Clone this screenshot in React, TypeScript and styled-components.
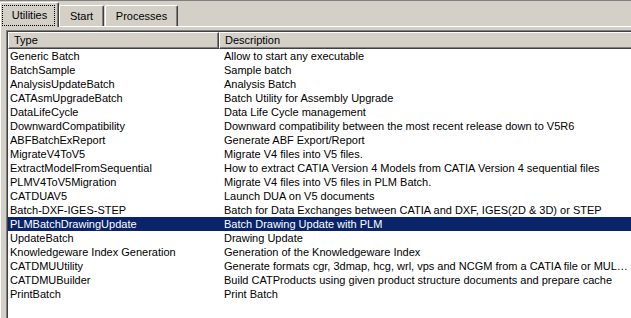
import styled, { createGlobalStyle } from "styled-components";

const Global = createGlobalStyle`
    html, body {
        margin: 0;
        padding: 0;
        background: #d4d0c8;
        overflow: hidden;
    }
    body {
        font-family: "Liberation Sans", Arial, sans-serif;
        font-size: 11px;
        color: #000;
    }
`;

const Window = styled.div`
    width: 631px;
    height: 318px;
    border-top: 1px solid #808080;
    box-sizing: border-box;
    display: flex;
    flex-direction: column;
    overflow: hidden;
`;
const TabStrip = styled.div`
    height: 25px;
    display: flex;
    align-items: flex-end;
    gap: 1px;
    position: relative;
    z-index: 1;
`;
const Tab = styled.div<{ $active?: boolean; $w: number }>`
    box-sizing: border-box;
    width: ${(p) => p.$w}px;
    height: ${(p) => (p.$active ? "25px" : "21px")};
    margin-bottom: ${(p) => (p.$active ? "-1px" : "0")};
    margin-right: ${(p) => (p.$active ? "-1px" : "0")};
    display: flex;
    align-items: center;
    justify-content: center;
    background: #d4d0c8;
    border-top: 1px solid #fff;
    border-left: 1px solid #fff;
    border-right: 1px solid #404040;
    box-shadow: inset -1px 0 0 #808080;
    border-radius: 2px 2px 0 0;
    position: relative;
`;
const Focus = styled.div`
    position: absolute;
    left: 1px;
    right: 3px;
    top: 2px;
    bottom: 1px;
    border: 1px dotted #000;
    pointer-events: none;
`;
const Panel = styled.div`
    flex: 1;
    border-top: 1px solid #fff;
    border-left: 1px solid #fff;
    padding: 3px 0 0 5px;
    display: flex;
    flex-direction: column;
    min-height: 0;
`;
const ListView = styled.div`
    flex: 1;
    margin-right: -2px;
    background: #fff;
    border-top: 1px solid #808080;
    border-left: 1px solid #808080;
    box-shadow: inset 1px 1px 0 #404040;
    padding: 1px 0 0 1px;
    display: flex;
    flex-direction: column;
`;
const HeaderRow = styled.div`
    display: grid;
    grid-template-columns: 211px 1fr;
`;
const HeaderCell = styled.div<{ $pad: number }>`
    box-sizing: border-box;
    height: 17px;
    background: #d4d0c8;
    border-top: 1px solid #fff;
    border-left: 1px solid #fff;
    border-bottom: 1px solid #404040;
    border-right: 1px solid #404040;
    box-shadow: inset -1px -1px 0 #808080;
    padding-left: ${(p) => p.$pad}px;
    line-height: 14px;
    white-space: nowrap;
`;
const Row = styled.div<{ $selected?: boolean }>`
    display: grid;
    grid-template-columns: 211px 1fr;
    height: 14px;
    line-height: 14px;
    background: ${(p) => (p.$selected ? "#0a246a" : "transparent")};
    color: ${(p) => (p.$selected ? "#fff" : "#000")};
`;
const Cell = styled.div<{ $pad: number }>`
    padding-left: ${(p) => p.$pad}px;
    padding-right: 4px;
    white-space: nowrap;
    overflow: hidden;
    text-overflow: ellipsis;
`;

const batches = [
    ["Generic Batch", "Allow to start any executable"],
    ["BatchSample", "Sample batch"],
    ["AnalysisUpdateBatch", "Analysis Batch"],
    ["CATAsmUpgradeBatch", "Batch Utility for Assembly Upgrade"],
    ["DataLifeCycle", "Data Life Cycle management"],
    ["DownwardCompatibility", "Downward compatibility between the most recent release down to V5R6"],
    ["ABFBatchExReport", "Generate ABF Export/Report"],
    ["MigrateV4ToV5", "Migrate V4 files into V5 files."],
    ["ExtractModelFromSequential", "How to extract CATIA Version 4 Models from CATIA Version 4 sequential files"],
    ["PLMV4ToV5Migration", "Migrate V4 files into V5 files in PLM Batch."],
    ["CATDUAV5", "Launch DUA on V5 documents"],
    ["Batch-DXF-IGES-STEP", "Batch for Data Exchanges between CATIA and DXF, IGES(2D & 3D) or STEP"],
    ["PLMBatchDrawingUpdate", "Batch Drawing Update with PLM"],
    ["UpdateBatch", "Drawing Update"],
    ["Knowledgeware Index Generation", "Generation of the Knowledgeware Index"],
    ["CATDMUUtility", "Generate formats cgr, 3dmap, hcg, wrl, vps and NCGM from a CATIA file or MUL…"],
    ["CATDMUBuilder", "Build CATProducts using given product structure documents and prepare cache"],
    ["PrintBatch", "Print Batch"],
];

const App = () => {
    return (
        <Window>
            <Global />
            <TabStrip>
                <Tab $active $w={59}>
                    Utilities
                    <Focus />
                </Tab>
                <Tab $w={45}>Start</Tab>
                <Tab $w={73}>Processes</Tab>
            </TabStrip>
            <Panel>
                <ListView>
                    <HeaderRow>
                        <HeaderCell $pad={5}>Type</HeaderCell>
                        <HeaderCell $pad={5}>Description</HeaderCell>
                    </HeaderRow>
                    {batches.map((b) => (
                        <Row key={b[0]} $selected={b[0] === "PLMBatchDrawingUpdate"}>
                            <Cell $pad={2}>{b[0]}</Cell>
                            <Cell $pad={5}>{b[1]}</Cell>
                        </Row>
                    ))}
                </ListView>
            </Panel>
        </Window>
    );
};
export default App;
